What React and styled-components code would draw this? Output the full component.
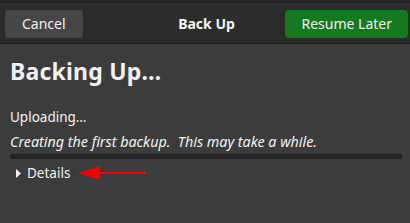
import React from 'react'
import styled, { createGlobalStyle } from 'styled-components'

const Global = createGlobalStyle`
  html, body { margin: 0; padding: 0; background: #3c3c3c; }
  body { font-family: "Noto Sans", "DejaVu Sans", sans-serif; color: #f2f2f2; }
`

const Window = styled.div`
  width: 410px;
  height: 223px;
  background: #3c3c3c;
  display: flex;
  flex-direction: column;
  overflow: hidden;
`

const HeaderBar = styled.div`
  height: 40px;
  border-top: 3px solid #222;
  border-bottom: 1px solid #1c1c1c;
  background: #2c2c2c;
  display: grid;
  grid-template-columns: 1fr auto 1fr;
  align-items: center;
  padding: 0 2px 0 5px;
`

const Button = styled.button`
  height: 28px;
  padding: 0 ${p => p.$pad}px;
  border: none;
  border-radius: 4px;
  background: ${p => (p.$suggested ? '#137a1f' : '#464646')};
  color: #f0f0f0;
  font-family: inherit;
  font-size: 14px;
  justify-self: ${p => p.$side};
  margin-top: 1px;
`

const Title = styled.div`
  font-weight: bold;
  font-size: 14px;
  color: #f4f4f4;
`

const Content = styled.div`
  display: flex;
  flex-direction: column;
  padding: 11px 8px 0 10px;
`

const Heading = styled.h1`
  margin: 0;
  font-size: 23px;
  font-weight: bold;
  line-height: 32px;
  letter-spacing: 0.2px;
`

const Status = styled.div`
  margin-top: 19px;
  font-size: 13.5px;
  line-height: 22px;
`

const Note = styled.div`
  margin-top: 3px;
  font-size: 14.3px;
  font-style: italic;
  line-height: 22px;
  white-space: pre;
`

const Progress = styled.div`
  margin-top: 1px;
  height: 3px;
  border-radius: 2px;
  background: #262626;
  border: 1px solid #1f1f1f;
`

const Expander = styled.div`
  margin-top: 4px;
  display: flex;
  align-items: center;
  gap: 6px;
  padding-left: 6px;
  font-size: 13.5px;
  line-height: 20px;
`

const Arrow = styled.svg`
  display: block;
  margin-left: 2px;
`

export default function App() {
  return (
    <Window>
      <Global />
      <HeaderBar>
        <Button $side="start" $pad={17}>Cancel</Button>
        <Title>Back Up</Title>
        <Button $side="end" $suggested $pad={16}>Resume Later</Button>
      </HeaderBar>
      <Content>
        <Heading>Backing Up…</Heading>
        <Status>Uploading…</Status>
        <Note>Creating the first backup.  This may take a while.</Note>
        <Progress />
        <Expander>
          <svg width="5" height="9" viewBox="0 0 5 9">
            <path d="M0 0 L5 4.5 L0 9 Z" fill="#f2f2f2" />
          </svg>
          <span>Details</span>
          <Arrow width="70" height="16" viewBox="0 0 70 16">
            <path d="M0 8 L22 1 L22 15 Z" fill="#f00000" />
            <rect x="20" y="7" width="47" height="2" fill="#f00000" />
          </Arrow>
        </Expander>
      </Content>
    </Window>
  )
}
